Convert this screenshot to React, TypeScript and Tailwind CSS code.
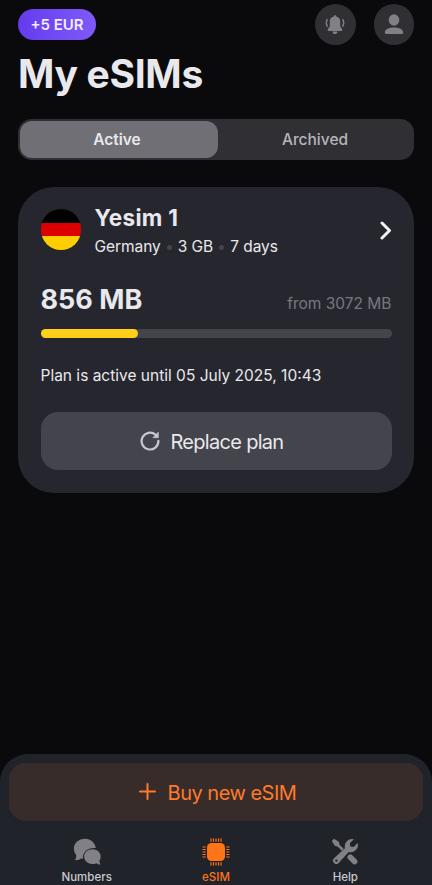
import React from 'react';

const BellIcon = () => (
  <svg width="22" height="22" viewBox="0 0 22 22" fill="none">
    <path d="M11 1.2c.8 0 1.2.5 1.3 1.3 2.6.6 3.9 2.6 3.9 5.2v4.1c0 1.7 2.1 2.5 2.1 4.2 0 .6-.5.9-1.1.9H4.8c-.6 0-1.1-.3-1.1-.9 0-1.7 2.1-2.5 2.1-4.2V7.7c0-2.6 1.3-4.6 3.9-5.2.1-.8.5-1.3 1.3-1.3z" fill="#808086" />
    <path d="M8.5 17.500h5c-.2 1.700-1.200 2.600-2.500 2.600s-2.300-.9-2.500-2.600z" fill="#808086" />
    <path d="M3.200 5.500C2 7.700 2 10 3.200 12.200M18.800 5.500c1.200 2.200 1.200 4.500 0 6.700" stroke="#808086" strokeWidth="1.400" strokeLinecap="round" />
  </svg>
);

const PersonIcon = () => (
  <svg width="20" height="21" viewBox="0 0 20 21" fill="#808086">
    <ellipse cx="10" cy="6" rx="5.3" ry="5.7" />
    <path d="M.8 18.600c0-3.600 4.200-5.200 9.200-5.200s9.200 1.600 9.200 5.200c0 .9-.5 1.400-1.400 1.400H2.200c-.9 0-1.400-.5-1.400-1.400z" />
  </svg>
);

const ChatIcon = () => (
  <svg width="28" height="28" viewBox="0 0 28 28" fill="#808086">
    <path d="M12 .8C5.700.8.9 5 .9 10.600c0 2.600.9 4.600 2.300 6.300.3 2.100-.3 3.900-1.500 5.200 2.600.4 4.600-.2 6.200-1.500l2 .4c-.5-6.800 4.600-11.500 12.900-10.900C22 4.500 17.700.8 12 .8z" />
    <path d="M19.400 11.200c-4.700 0-8.300 3.200-8.300 7.400s3.600 7.500 8.300 7.500c1.500 0 2.800-.3 4-.9 1.100.8 2.600 1.500 4.200 1.300-.8-1.100-1.200-2.500-1.200-3.700.8-1.200 1.300-2.600 1.300-4.200 0-4.200-3.600-7.400-8.300-7.400z" />
  </svg>
);

const pins = [9, 11.5, 14, 16.5, 19];
const ChipIcon = () => (
  <svg width="28" height="28" viewBox="0 0 28 28" fill="none" stroke="#ff7417">
    <rect x="5" y="5" width="18" height="18" rx="4.5" fill="#ff7417" stroke="none" />
    {pins.map((p) => (
      <path key={p} d={`M${p} .5v3.300M${p} 24.200v3.300M.5 ${p}h3.300M24.200 ${p}h3.300`} strokeWidth="1.200" />
    ))}
  </svg>
);

const ToolsIcon = () => (
  <svg width="28" height="28" viewBox="0 0 28 28" fill="none">
    <path d="M.8 3L3 .8l4.800 2.900.9 3.200 6.200 6.200-1.800 1.800-6.200-6.200-3.200-.9z" fill="#808086" />
    <path d="M19.300 19.300l4.300 4.300" stroke="#808086" strokeWidth="5.600" strokeLinecap="round" />
    <path fillRule="evenodd" d="M26.700 4.900a7.400 7.400 0 0 1-9.100 9.100L7.700 24.900a3.300 3.300 0 0 1-4.700-4.700L14 10.300A7.400 7.400 0 0 1 22.900 1.200l-4.100 4.100.5 3.300 3.300.5zM5.400 21.400a1.200 1.200 0 1 0 0 2.400 1.200 1.200 0 0 0 0-2.400z" fill="#808086" stroke="#21232a" strokeWidth="0.8" paintOrder="stroke" />
  </svg>
);

const ReplaceIcon = () => (
  <svg width="20" height="20" viewBox="0 0 20 20" fill="none">
    <path d="M18.400 9.800A8.400 8.400 0 1 1 15.600 3.800" stroke="#c9c8d0" strokeWidth="2.200" strokeLinecap="round" />
    <path d="M18.400 1.100v5.700h-5.600z" fill="#c9c8d0" stroke="#c9c8d0" strokeLinejoin="round" strokeWidth=".5" />
  </svg>
);

export default function App() {
  return (
    <div className="flex h-[885px] w-[432px] flex-col overflow-hidden bg-[#0a0a0d] font-['Inter',sans-serif] text-[#e9e9ed]">
      <header className="flex h-[49px] shrink-0 items-center justify-between px-[18px]">
        <div className="flex h-[31px] w-[78px] items-center justify-center rounded-full bg-linear-to-r from-[#653bed] to-[#8059fb] pt-px text-[15px] font-semibold text-[#f3edff]">
          <span>+5 EUR</span>
        </div>
        <div className="flex gap-[18px]">
          <button className="flex size-[40.5px] items-center justify-center rounded-full bg-[#303034]"><BellIcon /></button>
          <button className="flex size-[40.5px] items-center justify-center rounded-full bg-[#303034]"><PersonIcon /></button>
        </div>
      </header>

      <h1 className="h-[70px] shrink-0 pl-[18px] text-[39px] leading-[49px] font-bold tracking-[-0.3px]">My eSIMs</h1>

      <div className="mx-[18px] flex h-[41px] shrink-0 rounded-[14px] bg-[#303034] p-[2px] text-[15.5px]">
        <div className="flex w-[198px] items-center justify-center rounded-[12px] bg-[#6f6f75] pr-[4px] font-semibold">Active</div>
        <div className="flex flex-1 items-center justify-center font-medium text-[#b5b5ba]">Archived</div>
      </div>

      <section className="mx-[18px] mt-[27px] flex h-[305.5px] shrink-0 flex-col rounded-[36px] bg-[#26272e] px-[22.5px] pt-[19px]">
        <div className="flex items-start">
          <div className="mt-[3px] flex size-[40.5px] flex-col overflow-hidden rounded-full">
            <div className="flex-1 bg-black" />
            <div className="flex-1 bg-[#dd0000]" />
            <div className="flex-1 bg-[#ffce00]" />
          </div>
          <div className="ml-[13.5px] flex-1">
            <div className="text-[22.5px] leading-[24px] font-bold tracking-[0.3px]">Yesim 1</div>
            <div className="mt-[5px] flex items-center text-[15.5px] leading-[24px] tracking-[-0.05px]">
              <span>Germany</span>
              <span className="mx-[6px] size-[5px] rounded-full bg-[#45464d]" />
              <span>3 GB</span>
              <span className="mx-[6px] size-[5px] rounded-full bg-[#45464d]" />
              <span>7 days</span>
            </div>
          </div>
          <svg className="mt-[15px]" width="12" height="19" viewBox="0 0 12 19" fill="none" stroke="#f1f1f5" strokeWidth="3" strokeLinecap="round" strokeLinejoin="round">
            <path d="M2 2l7.500 7.500L2 17" />
          </svg>
        </div>

        <div className="mt-[23px] flex items-baseline justify-between">
          <span className="text-[27px] leading-[36px] font-bold">856 MB</span>
          <span className="text-[15.5px] text-[#77777f]">from 3072 MB</span>
        </div>
        <div className="mt-[11px] h-[9px] shrink-0 rounded-full bg-[#44444b]">
          <div className="h-full w-[97.5px] rounded-full bg-[#ffcf1b]" />
        </div>
        <div className="mt-[26px] text-[15.5px] leading-[24px]">Plan is active until 05 July 2025, 10:43</div>
        <button className="mt-[24px] flex h-[58px] shrink-0 items-center justify-center gap-[10px] rounded-[17px] bg-[#44444c] pr-[8px] text-[20px]">
          <ReplaceIcon />
          <span className="pt-[2px] tracking-[-0.7px]">Replace plan</span>
        </button>
      </section>

      <footer className="mt-auto flex h-[131px] shrink-0 flex-col rounded-t-[28px] bg-[#21232a] px-[9px] pt-[9px]">
        <button className="flex h-[58px] shrink-0 items-center justify-center gap-[12px] rounded-[17px] bg-[#382c2a] pb-px pl-[3px] text-[20px] text-[#ff7a2b]">
          <svg width="17" height="17" viewBox="0 0 17 17" stroke="#ff7a2b" strokeWidth="2" strokeLinecap="round"><path d="M8.500 1v15M1 8.500h15" /></svg>
          <span className="pt-[2px] tracking-[-0.5px]">Buy new eSIM</span>
        </button>
        <nav className="mx-[13px] mt-[17px] flex">
          <div className="flex flex-1 flex-col items-center text-[11.5px] leading-[16px] font-medium text-[#c9c9ce]">
            <ChatIcon /><span className="mt-[3px]">Numbers</span>
          </div>
          <div className="flex flex-1 flex-col items-center text-[11.5px] leading-[16px] font-medium text-[#ff7417]">
            <ChipIcon /><span className="mt-[3px]">eSIM</span>
          </div>
          <div className="flex flex-1 flex-col items-center text-[11.5px] leading-[16px] font-medium text-[#c9c9ce]">
            <ToolsIcon /><span className="mt-[3px]">Help</span>
          </div>
        </nav>
      </footer>
    </div>
  );
}
